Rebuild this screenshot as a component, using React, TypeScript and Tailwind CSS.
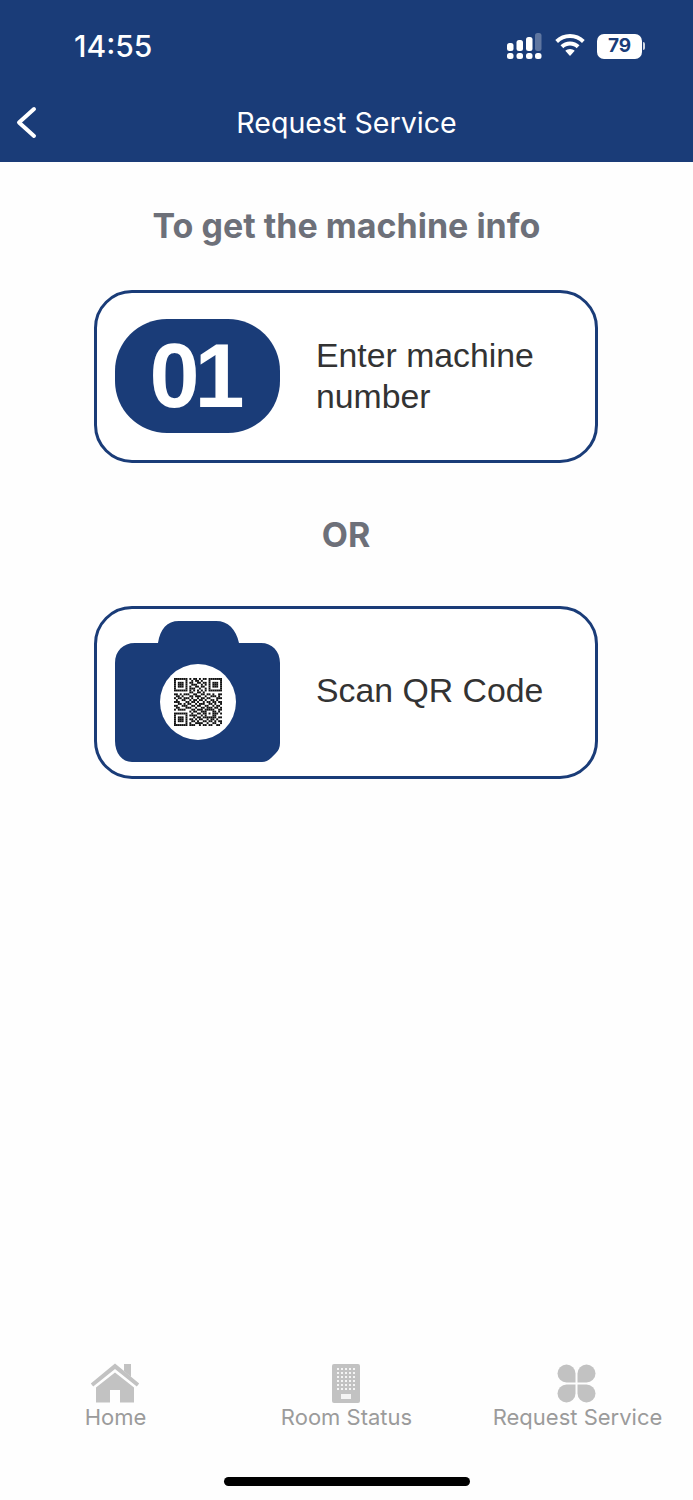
import { ReactNode } from "react";

const NAVY = "#1a3c78";

// pseudo QR pattern, good enough at this size
const qrRows = [
  "1111111010110101101111111",
  "1000001001011010001000001",
  "1011101011001101101011101",
  "1011101001110010101011101",
  "1011101010011011001011101",
  "1000001011100100101000001",
  "1111111010101010101111111",
  "0000000011001101000000000",
  "1101011100110011011010011",
  "0110100011011100100111010",
  "1011011101001011011000111",
  "0100110010110110100110100",
  "1110001101101001011011011",
  "0011010110010111001101001",
  "1100111001101100110010110",
  "0110001110010011011101101",
  "1011110001101110111110011",
  "0000000010110011100011010",
  "1111111001001101101011101",
  "1000001011110010100011000",
  "1011101000101101111111011",
  "1011101011010110010110100",
  "1011101001101001101101011",
  "1000001010011110010011001",
  "1111111011100101101100110",
];

const QrCode = () => (
  <svg width="48" height="48" viewBox="0 0 25 25" aria-hidden>
    {qrRows.map((row, y) =>
      row.split("").map((c, x) => (c === "1" ? <rect key={`${x}-${y}`} x={x} y={y} width="1" height="1" fill="#111" /> : null))
    )}
  </svg>
);

const SignalIcon = () => (
  <svg width="36" height="26" viewBox="0 0 36 26" aria-hidden>
    <rect x="0" y="10" width="6.500" height="8" rx="2.500" fill="#fff" />
    <rect x="9.500" y="7" width="6.500" height="11" rx="2.500" fill="#fff" />
    <rect x="19" y="4" width="6.500" height="14" rx="2.500" fill="#fff" />
    <rect x="28" y="0" width="6.500" height="18" rx="2.500" fill="#fff" fillOpacity="0.3" />
    <rect x="0" y="20" width="6.500" height="6" rx="2.500" fill="#fff" />
    <rect x="9.500" y="20" width="6.500" height="6" rx="2.500" fill="#fff" />
    <rect x="19" y="20" width="6.500" height="6" rx="2.500" fill="#fff" />
    <rect x="28" y="20" width="6.500" height="6" rx="2.500" fill="#fff" />
  </svg>
);

const WifiIcon = () => (
  <svg width="30" height="24" viewBox="0 0 30 24" aria-hidden>
    <path d="M15 0C9.300 0 4.200 2.200 0.300 5.900L3 8.900C6.200 5.900 10.400 4 15 4s8.800 1.900 12 4.900l2.700-3C25.800 2.200 20.700 0 15 0z" fill="#fff" />
    <path d="M15 7.500c-3.700 0-7 1.400-9.500 3.700l2.800 3c1.800-1.600 4.100-2.700 6.700-2.700s4.900 1.100 6.700 2.700l2.800-3C22 8.900 18.700 7.500 15 7.500z" fill="#fff" />
    <path d="M15 15c-1.800 0-3.400.7-4.700 1.800L15 22l4.700-5.200C18.400 15.700 16.800 15 15 15z" fill="#fff" />
  </svg>
);

const Battery = () => (
  <div className="flex items-center gap-[1px]">
    <div className="flex h-[25px] w-[45px] items-center justify-center rounded-[7px] bg-white text-[19px] font-bold text-[#1a3c78]">79</div>
    <div className="h-[8px] w-[2px] rounded-r-full bg-white/80" />
  </div>
);

const CameraIcon = () => (
  <svg width="165" height="141" viewBox="0 0 165 141" aria-hidden className="block">
    <path
      d="M43 22C45 8 52 0 64 0H101C113 0 121 8 124 22H146C157 22 165 30 165 42V122Q165 128 161 132L156 137Q152 141 147 141H17C7 141 0 132 0 120V42C0 30 8 22 20 22Z"
      fill={NAVY}
    />
  </svg>
);

const HomeIcon = () => (
  <svg width="50" height="40" viewBox="0 0 50 40" aria-hidden>
    <path d="M34 1h7v13l-7-6z" fill="#c2c2c2" />
    <path d="M25 0.500L0.800 20.500l2.400 3L25 6l21.800 17.500 2.400-3z" fill="#c2c2c2" />
    <path d="M25 9.500L6 24.500V39.500H20V27H30V39.500H44V24.500z" fill="#c2c2c2" />
  </svg>
);

const BuildingIcon = () => (
  <svg width="28" height="39" viewBox="0 0 28 39" aria-hidden>
    <rect width="28" height="39" rx="2" fill="#c2c2c2" />
    {[5, 9, 13, 17, 21, 25].map((y) =>
      [6, 10, 14, 18, 22].map((x) => <rect key={`${x}-${y}`} x={x - 1} y={y - 1} width="2" height="2" fill="#f4f4f4" />)
    )}
    <rect x="9" y="30" width="10" height="5" fill="#f4f4f4" />
  </svg>
);

const CloverIcon = () => (
  <svg width="39" height="39" viewBox="0 0 39 39" aria-hidden>
    <path d="M18.500 18.500H9.500a9 9 0 1 1 9-9z" fill="#c2c2c2" />
    <path d="M20.500 18.500h9a9 9 0 1 0-9-9z" fill="#c2c2c2" />
    <path d="M18.500 20.500H9.500a9 9 0 1 0 9 9z" fill="#c2c2c2" />
    <path d="M20.500 20.500h9a9 9 0 1 1-9 9z" fill="#c2c2c2" />
  </svg>
);

const Card = ({ graphic, children }: { graphic: ReactNode; children: ReactNode }) => (
  <button className="flex h-[173px] w-[504px] items-center rounded-[38px] border-[3px] border-[#1a3c78] bg-white pl-[18px] text-left">
    <div className="w-[165px] shrink-0 pb-[2px]">{graphic}</div>
    <div className="pb-[2px] pl-[36px] pr-4 font-['Liberation_Sans',sans-serif] text-[33.8px] leading-[41px] text-[#333333]">{children}</div>
  </button>
);

const TabItem = ({ icon, label }: { icon: ReactNode; label: string }) => (
  <div className="flex w-[231px] flex-col items-center">
    <div className="mr-[2px] flex h-[40px] items-end">{icon}</div>
    <span className="mt-[1px] text-[22px] leading-[27px] text-[#9b9b9b]">{label}</span>
  </div>
);

export default function App() {
  return (
    <div className="flex h-[1500px] w-[693px] flex-col overflow-hidden bg-[#fefefe] font-['Inter',sans-serif]">
      <header className="h-[162px] shrink-0 bg-[#1a3c78] text-white">
        <div className="flex h-[84px] items-center justify-between pl-[74px] pr-[48px] pt-[8px]">
          <span className="text-[30px] font-medium leading-none">14:55</span>
          <div className="flex items-center gap-[12px]">
            <SignalIcon />
            <WifiIcon />
            <Battery />
          </div>
        </div>
        <div className="relative flex h-[78px] items-center justify-center">
          <svg width="24" height="36" viewBox="0 0 24 36" className="absolute left-[13px] top-[21px]" aria-hidden>
            <path d="M21 4L6 17.500L21 31" fill="none" stroke="#fff" strokeWidth="4" strokeLinecap="round" strokeLinejoin="round" />
          </svg>
          <h1 className="pt-[1px] text-[28.6px] font-normal leading-none">Request Service</h1>
        </div>
      </header>

      <main className="flex flex-1 flex-col items-center pr-[1px]">
        <h2 className="ml-[1px] mt-[43px] text-[34px] font-bold leading-[42px] text-[#6d7079]">To get the machine info</h2>
        <div className="mt-[43px]">
          <Card
            graphic={
              <div className="flex h-[114px] w-[165px] items-center justify-center rounded-[52px] bg-[#1a3c78] pr-[6px] font-['Liberation_Sans',sans-serif] text-[90px] font-bold leading-none tracking-[-5px] text-white">
                01
              </div>
            }
          >
            Enter machine number
          </Card>
        </div>
        <div className="mt-[52px] text-[34px] font-bold leading-[40px] text-[#6d7079]">OR</div>
        <div className="mt-[51px]">
          <Card
            graphic={
              <div className="relative">
                <CameraIcon />
                <div className="absolute left-[45px] top-[43px] flex h-[76px] w-[76px] items-center justify-center rounded-full bg-white">
                  <QrCode />
                </div>
              </div>
            }
          >
            <span className="block pb-[2px]">Scan QR Code</span>
          </Card>
        </div>
      </main>

      <footer className="shrink-0">
        <div className="flex pb-[46px]">
          <TabItem icon={<HomeIcon />} label="Home" />
          <TabItem icon={<BuildingIcon />} label="Room Status" />
          <TabItem icon={<CloverIcon />} label="Request Service" />
        </div>
        <div className="flex justify-center pb-[14px]">
          <div className="h-[9px] w-[246px] rounded-full bg-black" />
        </div>
      </footer>
    </div>
  );
}
